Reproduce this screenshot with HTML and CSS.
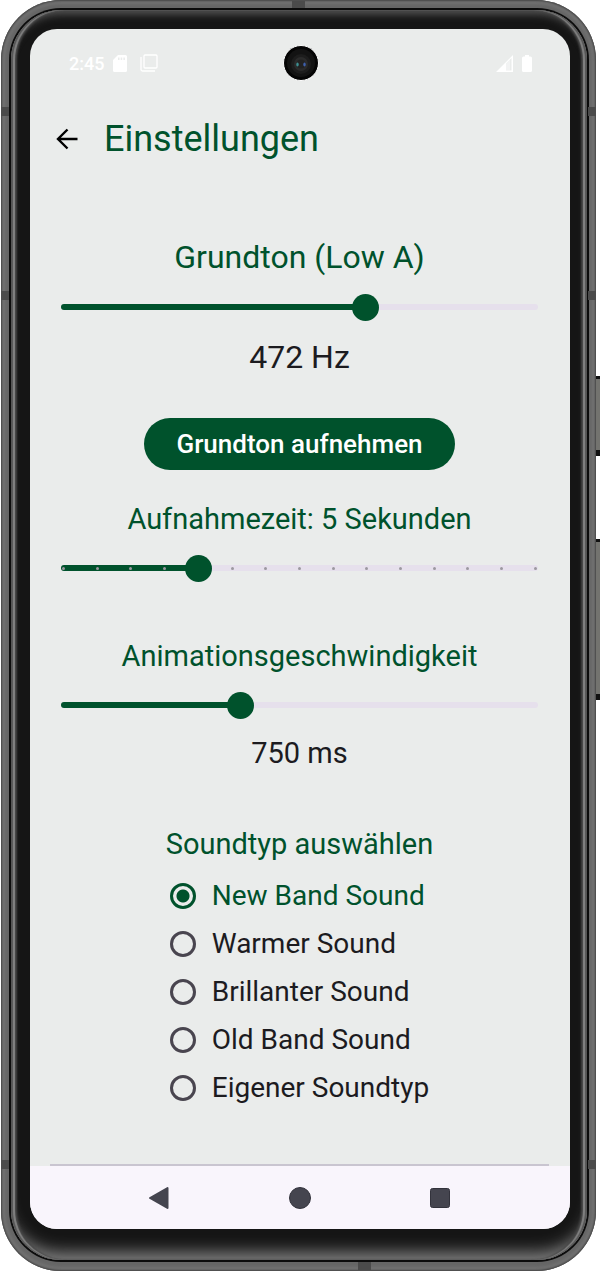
FILE: index.html
```html
<!DOCTYPE html>
<html lang="de">
<head>
    <meta charset="UTF-8">
    <meta name="viewport" content="width=device-width, initial-scale=1.0">
    <title>Einstellungen</title>
    <link rel="stylesheet" href="styles.css">
</head>
<body>
    <div class="phone">
        <span class="antenna left upper"></span>
        <span class="antenna left middle"></span>
        <span class="antenna left lower"></span>
        <span class="antenna right upper"></span>
        <span class="antenna right middle"></span>
        <span class="antenna right lower"></span>
        <span class="antenna top"></span>
        <span class="antenna bottom"></span>
        <span class="side-key power"></span>
        <span class="side-key volume"></span>

        <div class="rim">
            <div class="bezel">
                <div class="screen">
                    <div class="status-bar">
                        <div class="status-group">
                            <span class="clock">2:45</span>
                            <svg width="14" height="17" viewBox="0 0 14 17"><path fill="#fff" fill-rule="evenodd" d="M5 0h7.500q1.500 0 1.500 1.500v14q0 1.500-1.500 1.500h-11Q0 17 0 15.500V5zM5 2.500V5h1.500V2.500zm2.700 0V5h1.500V2.500zm2.700 0V5h1.500V2.500z"/></svg>
                            <svg class="copies" width="18" height="18" viewBox="0 0 18 18" fill="none" stroke="#fff" stroke-width="1.300"><rect x="4" y="1" width="13" height="13" rx="1"/><path d="M1 3v12.500Q1 17 2.500 17H15"/></svg>
                        </div>
                        <svg class="camera" width="36" height="36" viewBox="0 0 36 36">
                            <circle cx="18" cy="18" r="17.500" fill="#050505" stroke="#fff" stroke-width="1"/>
                            <circle cx="18" cy="18" r="14" fill="#131313"/>
                            <circle cx="18" cy="19" r="10" fill="#1d1d1d"/>
                            <circle cx="18" cy="19" r="7" fill="#2b2b2b"/>
                            <circle cx="18" cy="19" r="4.500" fill="#222"/>
                            <ellipse cx="14.500" cy="19.500" rx="1.200" ry="2" fill="#3d8f92"/>
                            <ellipse cx="21.500" cy="19.500" rx="1.200" ry="2" fill="#3e60ad"/>
                        </svg>
                        <div class="status-group end">
                            <svg width="17" height="17" viewBox="0 0 17 17"><path fill="#fff" fill-rule="evenodd" d="M0 17 17 0v17zM10 8.500V15.500H15.500V3z"/><path fill="#fff" opacity=".4" d="M10 8.500 14 4.500v11h-4z"/></svg>
                            <svg width="10" height="17" viewBox="0 0 10 17"><path fill="#fff" d="M3 0h4v1.500h1.500Q10 1.500 10 3v12.500Q10 17 8.500 17h-7Q0 17 0 15.500V3q0-1.500 1.500-1.500H3z"/></svg>
                        </div>
                    </div>

                    <header class="app-bar">
                        <button class="back" type="button" aria-label="Zurück">
                            <svg width="22" height="22" viewBox="0 0 22 22" fill="none" stroke="#000" stroke-width="2.400"><path d="M21.500 11H2M11.500 1.500 2 11l9.500 9.500"/></svg>
                        </button>
                        <h1>Einstellungen</h1>
                    </header>

                    <main class="settings">
                        <section class="setting tone">
                            <label class="large" for="pitch">Grundton (Low A)</label>
                            <div class="slider">
                                <div class="track"><div class="fill" style="width: 64%"></div></div>
                                <input type="range" id="pitch" min="440" max="490" value="472">
                            </div>
                            <output class="large" for="pitch">472 Hz</output>
                        </section>

                        <button class="record" type="button">Grundton aufnehmen</button>

                        <section class="setting duration">
                            <label for="duration">Aufnahmezeit: 5 Sekunden</label>
                            <div class="slider">
                                <div class="track">
                                    <div class="fill" style="width: 28.570%"></div>
                                    <div class="ticks"><i></i><i></i><i></i><i></i><i></i><i></i><i></i><i></i><i></i><i></i><i></i><i></i><i></i><i></i><i></i></div>
                                </div>
                                <input type="range" id="duration" min="1" max="15" value="5">
                            </div>
                        </section>

                        <section class="setting speed">
                            <label for="speed">Animationsgeschwindigkeit</label>
                            <div class="slider">
                                <div class="track"><div class="fill" style="width: 37.500%"></div></div>
                                <input type="range" id="speed" min="0" max="2000" step="50" value="750">
                            </div>
                            <output for="speed">750 ms</output>
                        </section>

                        <fieldset class="sounds">
                            <legend>Soundtyp auswählen</legend>
                            <label><input type="radio" name="sound" checked><span>New Band Sound</span></label>
                            <label><input type="radio" name="sound"><span>Warmer Sound</span></label>
                            <label><input type="radio" name="sound"><span>Brillanter Sound</span></label>
                            <label><input type="radio" name="sound"><span>Old Band Sound</span></label>
                            <label><input type="radio" name="sound"><span>Eigener Soundtyp</span></label>
                        </fieldset>
                    </main>

                    <nav class="nav-bar">
                        <button type="button" aria-label="Zurück"><svg width="22" height="24" viewBox="0 0 22 24"><path d="M2 12 19.500 2v20z" fill="#45454f" stroke="#45454f" stroke-width="2" stroke-linejoin="round"/></svg></button>
                        <button type="button" aria-label="Startseite"><svg width="22" height="22" viewBox="0 0 22 22"><circle cx="11" cy="11" r="10.500" fill="#45454f" stroke="#33333c"/></svg></button>
                        <button type="button" aria-label="Übersicht"><svg width="20" height="20" viewBox="0 0 20 20"><rect x=".5" y=".5" width="19" height="19" rx="2" fill="#45454f" stroke="#33333c"/></svg></button>
                    </nav>
                </div>
            </div>
        </div>
    </div>
</body>
</html>
```

FILE: styles.css
```css
* { box-sizing: border-box; }
body { margin: 0; background: #fff; font-family: Roboto, "Liberation Sans", sans-serif; color: #1c1b1f; }
button { padding: 0; border: none; background: none; font: inherit; cursor: pointer; }
svg { display: block; }

/* phone case */
.phone { position: relative; display: flex; min-height: 100vh; margin: 0 4px 0 1px; padding: 8px 7px 9px 8px; border-radius: 60px; background: #666; box-shadow: inset 0 0 2px 1px #444, inset 0 0 3px 4px #737373; }
.rim { display: flex; flex: 1; min-width: 0; padding: 2px; border-radius: 52px; background: #0c0c0c; }
.bezel { display: flex; flex: 1; min-width: 0; padding: 19px 17px 31px 19px; border-radius: 50px; background: #151515; box-shadow: inset 2px 0 1px #555, inset -2px 0 1px #555, inset 4px 0 1px #858585, inset -4px 0 1px #858585, inset 6px 0 2px #444, inset -6px 0 2px #444, inset 0 -16px 16px -8px #808080, inset 0 8px 8px -4px #5a5a5a; }
.screen { display: flex; flex-direction: column; flex: 1; min-width: 0; overflow: hidden; border-radius: 27px; background: #eaeceb; }

.antenna { position: absolute; background: #4b4b4b; }
.antenna.left, .antenna.right { width: 8px; height: 9px; }
.left { left: 0; }
.right { right: 0; }
.upper { top: 107px; }
.middle { top: 291px; }
.lower { bottom: 102px; }
.antenna.top { top: 1px; left: 291px; width: 13px; height: 7px; }
.antenna.bottom { bottom: 1px; left: 357px; width: 13px; height: 8px; }
.side-key { position: absolute; right: -4px; width: 4px; border: solid #111; border-width: 3px 0 6px; background: #73736f; }
.power { top: 376px; height: 80px; }
.volume { top: 539px; height: 161px; }

/* status bar and header */
.status-bar { display: grid; grid-template-columns: 1fr auto 1fr; align-items: center; height: 68px; padding: 0 38px 0 39px; color: #fff; }
.status-group { display: flex; align-items: center; gap: 9px; }
.status-group.end { justify-content: flex-end; }
.clock { font-size: 18px; font-weight: 500; }
.copies { margin-left: 4px; }
.app-bar { display: flex; align-items: center; gap: 26px; height: 84px; padding-left: 26px; }
h1 { margin: 0; font-size: 36px; font-weight: 400; line-height: 44px; color: #00522c; }

/* settings */
.settings { display: flex; flex-direction: column; flex: 1; align-items: center; margin: 0 21px 0 20px; padding-top: 56px; border-bottom: 2px solid #c9c5d0; }
.setting { display: flex; flex-direction: column; align-items: center; width: 100%; font-size: 29px; line-height: 40px; }
.setting label { color: #00522c; }
.setting .large { font-size: 32px; }
.tone { gap: 16px; }
.record { margin: 41px 0 29px; padding: 0 32px; height: 52px; border-radius: 26px; background: #00522c; color: #fff; font-size: 26px; font-weight: 500; }
.duration { gap: 15px; }
.speed { gap: 15px; margin-top: 54px; }
.speed output { margin-top: -1px; }

.slider { display: grid; align-items: center; width: 100%; height: 28px; }
.slider > * { grid-area: 1 / 1; }
.track { display: grid; align-items: center; height: 6px; margin: 0 11px; border-radius: 3px; background: #e6e0ec; }
.track > * { grid-area: 1 / 1; }
.fill { height: 6px; border-radius: 3px; background: #00522c; }
.ticks { display: flex; justify-content: space-between; margin: 0 1px; }
.ticks i { width: 3px; height: 3px; border-radius: 50%; background: #9c98a0; }
.slider input { width: 100%; height: 28px; margin: 0; background: none; appearance: none; }
.slider input::-webkit-slider-thumb { width: 27px; height: 27px; border-radius: 50%; background: #00522c; appearance: none; }

/* sound selection */
.sounds { min-width: 0; margin: 51px 0; padding: 0; border: none; font-size: 28px; line-height: 48px; }
.sounds legend { padding: 0 3px; font-size: 29px; line-height: 40px; color: #00522c; }
.sounds label { display: flex; align-items: center; gap: 16px; margin-left: 7px; }
.sounds legend + label { margin-top: 8px; }
.sounds input { width: 26px; height: 26px; margin: 0; border: 3px solid #49454f; border-radius: 50%; appearance: none; }
.sounds input:checked { border-color: #00522c; background: radial-gradient(circle, #00522c 6px, transparent 7px); }
.sounds input:checked + span { color: #00522c; }

/* system navigation */
.nav-bar { display: flex; justify-content: space-between; align-items: center; height: 63px; padding: 0 120px 0 118px; background: #f9f5fc; }
```
